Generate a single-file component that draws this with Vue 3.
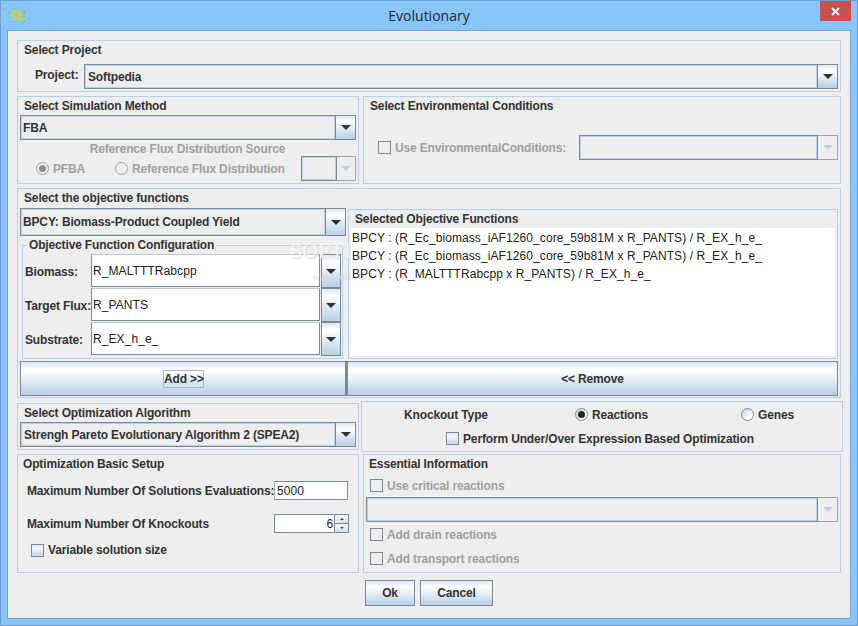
<script setup>
const selected = [
  'BPCY : (R_Ec_biomass_iAF1260_core_59b81M x R_PANTS) / R_EX_h_e_',
  'BPCY : (R_Ec_biomass_iAF1260_core_59b81M x R_PANTS) / R_EX_h_e_',
  'BPCY : (R_MALTTTRabcpp x R_PANTS) / R_EX_h_e_'
];

const configRows = [
  { label: 'Biomass:', value: 'R_MALTTTRabcpp' },
  { label: 'Target Flux:', value: 'R_PANTS' },
  { label: 'Substrate:', value: 'R_EX_h_e_' }
];
</script>

<template>
  <div class="window">
    <div class="titlebar">
      <div class="app-icon">
        <svg width="20" height="14" viewBox="0 0 20 14">
          <circle cx="8" cy="7" r="3.8" fill="none" stroke="#cbdc1c" stroke-width="2.6" />
          <circle cx="14.3" cy="11.2" r="1.7" fill="#cbdc1c" />
          <text x="14" y="6" font-size="6.5" fill="#9aa7a8" font-family="Liberation Sans, sans-serif">3</text>
        </svg>
      </div>
      <div class="title-text">Evolutionary</div>
      <div class="close-wrap"><div class="close">
        <svg width="11" height="11" viewBox="0 0 11 11">
          <path d="M2 2 L9 9 M9 2 L2 9" stroke="#fff" stroke-width="2" />
        </svg>
      </div></div>
    </div>

    <div class="content">
      <section class="panel project">
        <div class="panel-title">Select Project</div>
        <div class="project-row">
          <span class="project-label">Project:</span>
          <div class="combo grow">
            <div class="combo-field pad3">Softpedia</div>
            <div class="combo-btn"><i class="arrow"></i></div>
          </div>
        </div>
      </section>

      <div class="split">
        <section class="panel left sim">
          <div class="panel-title">Select Simulation Method</div>
          <div class="combo inset">
            <div class="combo-field">FBA</div>
            <div class="combo-btn"><i class="arrow"></i></div>
          </div>
          <div class="ref-title">Reference Flux Distribution Source</div>
          <div class="ref-row">
            <i class="radio off sel"></i>
            <span class="muted pfba">PFBA</span>
            <i class="radio off"></i>
            <span class="muted ref-label">Reference Flux Distribution</span>
            <div class="combo small disabled">
              <div class="combo-field"></div>
              <div class="combo-btn"><i class="arrow"></i></div>
            </div>
          </div>
        </section>

        <section class="panel right env">
          <div class="panel-title">Select Environmental Conditions</div>
          <div class="env-row">
            <i class="check off"></i>
            <span class="muted">Use EnvironmentalConditions:</span>
            <div class="combo disabled env-combo">
              <div class="combo-field"></div>
              <div class="combo-btn"><i class="arrow"></i></div>
            </div>
          </div>
        </section>
      </div>

      <section class="panel objective">
        <div class="panel-title">Select the objective functions</div>
        <div class="obj-body">
          <div class="obj-left">
            <div class="combo obj-combo">
              <div class="combo-field">BPCY: Biomass-Product Coupled Yield</div>
              <div class="combo-btn"><i class="arrow"></i></div>
            </div>
            <fieldset class="config">
              <legend>Objective Function Configuration</legend>
              <div v-for="row in configRows" :key="row.label" class="config-row">
                <span class="config-label">{{ row.label }}</span>
                <div class="config-field">{{ row.value }}</div>
                <div class="combo-btn config-btn"><i class="arrow"></i></div>
              </div>
            </fieldset>
          </div>
          <div class="selected">
            <div class="panel-title">Selected Objective Functions</div>
            <div class="selected-list">
              <div v-for="(item, i) in selected" :key="i" class="selected-item">{{ item }}</div>
            </div>
          </div>
        </div>
        <div class="obj-actions">
          <button class="btn add"><span class="focus">Add &gt;&gt;</span></button>
          <button class="btn remove">&lt;&lt; Remove</button>
        </div>
        <div class="wm-big">SOFTPEDIA</div>
        <div class="wm-small">www.softpedia.com</div>
      </section>

      <div class="split tight">
        <section class="panel left algo">
          <div class="panel-title">Select Optimization Algorithm</div>
          <div class="combo inset">
            <div class="combo-field pad3">Strengh Pareto Evolutionary Algorithm 2 (SPEA2)</div>
            <div class="combo-btn"><i class="arrow"></i></div>
          </div>
        </section>

        <section class="panel knockout">
          <div class="ko-row">
            <span class="ko-label">Knockout Type</span>
            <span class="ko-opt reactions"><i class="radio sel"></i>Reactions</span>
            <span class="ko-opt"><i class="radio"></i>Genes</span>
          </div>
          <div class="ko-check">
            <i class="check"></i>
            <span>Perform Under/Over Expression Based Optimization</span>
          </div>
        </section>
      </div>

      <div class="split bottom">
        <section class="panel left basic">
          <div class="panel-title t5">Optimization Basic Setup</div>
          <div class="basic-row first">
            <span class="basic-label">Maximum Number Of Solutions Evaluations:</span>
            <div class="text-input">5000</div>
          </div>
          <div class="basic-row second">
            <span class="basic-label">Maximum Number Of Knockouts</span>
            <div class="spinner">
              <div class="spin-value">6</div>
              <div class="spin-btns">
                <div class="spin-btn"><i class="tiny up"></i></div>
                <div class="spin-btn"><i class="tiny down"></i></div>
              </div>
            </div>
          </div>
          <div class="variable">
            <i class="check"></i>
            <span>Variable solution size</span>
          </div>
        </section>

        <section class="panel right essential">
          <div class="panel-title t5">Essential Information</div>
          <div class="ess-check c1"><i class="check off"></i><span class="muted">Use critical reactions</span></div>
          <div class="combo disabled inset ess-combo">
            <div class="combo-field"></div>
            <div class="combo-btn"><i class="arrow"></i></div>
          </div>
          <div class="ess-check c2"><i class="check off"></i><span class="muted">Add drain reactions</span></div>
          <div class="ess-check c3"><i class="check off"></i><span class="muted">Add transport reactions</span></div>
        </section>
      </div>

      <div class="footer">
        <button class="btn ok">Ok</button>
        <button class="btn cancel">Cancel</button>
      </div>
    </div>
  </div>
</template>

<style scoped>
* {
  box-sizing: border-box;
}
.window {
  width: 858px;
  height: 626px;
  background: #88c5fb;
  border: 1px solid #6c9fd0;
  padding: 0 6px 6px;
  display: flex;
  flex-direction: column;
  font-family: "Liberation Sans", Arial, sans-serif;
  font-size: 12px;
  font-weight: bold;
  letter-spacing: -0.15px;
  color: #333;
  overflow: hidden;
}
.titlebar {
  height: 29px;
  display: grid;
  grid-template-columns: 1fr auto 1fr;
  flex: none;
}
.app-icon {
  padding: 7px 0 0 1px;
}
.title-text {
  font-family: "Open Sans", sans-serif;
  font-size: 14px;
  font-weight: normal;
  letter-spacing: 0;
  color: #1c2733;
  line-height: 30px;
}
.close-wrap {
  display: flex;
  justify-content: flex-end;
}
.close {
  width: 31px;
  height: 20px;
  background: #c75050;
  display: flex;
  align-items: center;
  justify-content: center;
}
.content {
  flex: 1;
  background: #eeeeee;
  border: 1px solid #6ea5d8;
  padding: 9px 9px 0;
}
.panel {
  border: 1px solid #b8cfe5;
  position: relative;
}
.panel-title {
  height: 15px;
  line-height: 17px;
  margin: 1px 0 0 6px;
  white-space: nowrap;
}
.panel-title.t5 {
  margin-left: 5px;
}
.split {
  display: flex;
  gap: 4px;
  margin-top: 4px;
}
.left {
  width: 342px;
  flex: none;
}
.right {
  flex: 1;
}
.project {
  height: 52px;
}
.project-row {
  display: flex;
  align-items: center;
  margin: 7px 2px 0 17px;
}
.project-label {
  width: 49px;
  flex: none;
  margin-top: -3px;
}
.grow {
  flex: 1;
}

/* combo boxes */
.combo {
  display: flex;
  height: 25px;
}
.inset {
  margin: 2px 2px 0;
}
.combo-field {
  flex: 1;
  min-width: 0;
  border: 1px solid #7a8a99;
  box-shadow: inset 0 0 0 1px #b8cfe5;
  padding: 1px 0 0 2px;
  line-height: 23px;
  white-space: nowrap;
}
.pad3 {
  padding-left: 3px;
}
.combo-btn {
  width: 20px;
  flex: none;
  border: 1px solid #7a8a99;
  border-left: none;
  background: linear-gradient(#dde8f3, #fff 22%, #b8cfe5);
  display: flex;
  align-items: center;
  justify-content: center;
}
.arrow {
  width: 0;
  height: 0;
  border-left: 5px solid transparent;
  border-right: 5px solid transparent;
  border-top: 5px solid #333;
}
.disabled .combo-btn {
  background: #eeeeee;
  border-color: #a3a3a3;
}
.disabled .arrow {
  border-top-color: #b8cfe5;
}
.muted {
  color: #a0a0a0;
  white-space: nowrap;
}

/* radios and checkboxes */
.radio {
  width: 13px;
  height: 13px;
  flex: none;
  display: inline-block;
  border-radius: 50%;
  border: 1px solid #7a8a99;
  background: linear-gradient(135deg, #b8cfe5, #fff 70%);
  position: relative;
}
.radio.sel::after {
  content: "";
  position: absolute;
  left: 2px;
  top: 2px;
  width: 7px;
  height: 7px;
  border-radius: 50%;
  background: #222;
}
.radio.off {
  background: none;
  border-color: #a3a3a3;
}
.radio.off.sel::after {
  background: #8f8f8f;
}
.check {
  width: 13px;
  height: 13px;
  flex: none;
  display: inline-block;
  border: 1px solid #7a8a99;
  background: linear-gradient(#dde8f3, #f6f9fc 30%, #c3d6e8);
}
.check.off {
  background: none;
}

/* simulation and environment */
.sim,
.env {
  height: 88px;
}
.ref-title {
  margin-top: 1px;
  height: 15px;
  line-height: 16px;
  text-align: center;
  color: #a0a0a0;
  padding-right: 1px;
}
.ref-row {
  display: flex;
  align-items: center;
  height: 25px;
  padding-left: 18px;
}
.pfba {
  margin-left: 4px;
  width: 62px;
}
.ref-label {
  margin-left: 4px;
  width: 169px;
}
.small {
  width: 55px;
}
.small .combo-btn {
  width: 19px;
}
.env-row {
  display: flex;
  align-items: center;
  height: 25px;
  margin: 22px 2px 0 14px;
}
.env-row .muted {
  margin-left: 4px;
  padding-top: 1px;
}
.env-combo {
  width: 259px;
  margin-left: auto;
}

/* objective */
.objective {
  height: 210px;
  margin-top: 4px;
}
.obj-body {
  display: flex;
  margin: 3px 2px 0;
}
.obj-left {
  width: 326px;
  margin-right: 2px;
  flex: none;
}
.obj-combo {
  height: 28px;
}
.obj-combo .combo-field {
  line-height: 26px;
  padding-top: 0;
}
.config {
  margin: 2px 0 0 2px;
  padding: 1px 0 2px 0;
  width: 321px;
  border: 1px solid #b8cfe5;
  min-width: 0;
}
.config legend {
  margin-left: 4px;
  padding: 0 2px;
  height: 15px;
  line-height: 15px;
}
.config-row {
  display: flex;
  height: 34px;
}
.config-label {
  width: 68px;
  flex: none;
  padding: 1px 0 0 2px;
  line-height: 34px;
  white-space: nowrap;
}
.config-field {
  width: 229px;
  height: 33px;
  background: #fff;
  border: 1px solid #7a8a99;
  border-top-color: #b9c5d1;
  padding: 1px 0 0 1px;
  line-height: 31px;
  font-weight: normal;
  letter-spacing: 0.09px;
  color: #222;
  flex: none;
}
.config-btn {
  width: 20px;
  height: 34px;
  border-left: 1px solid #7a8a99;
  margin-left: 1px;
}
.selected {
  flex: 1;
  height: 150px;
  margin-top: 1px;
  border: 1px solid #b8cfe5;
  margin-right: 0;
}
.selected-list {
  position: relative;
  z-index: 1;
  margin: 2px 2px 2px;
  height: 128px;
  background: #fff;
  padding: 1px 0 0 1px;
  font-weight: normal;
  letter-spacing: 0.09px;
  color: #222;
}
.selected-item {
  height: 18px;
  line-height: 18px;
  white-space: nowrap;
}
.obj-actions {
  display: flex;
  margin: 2px 2px 0;
}
.btn {
  font: inherit;
  letter-spacing: inherit;
  color: inherit;
  border: 1px solid #7a8a99;
  background: linear-gradient(#dde8f3, #fff 25%, #b8cfe5);
  padding: 0;
  display: flex;
  align-items: center;
  justify-content: center;
}
.add {
  width: 326px;
  height: 35px;
  padding-left: 1px;
}
.remove {
  flex: 1;
  height: 35px;
  border-left: 2px solid #7a8a99;
  font-size: 12px;
}
.focus {
  display: block;
  width: 41px;
  height: 18px;
  line-height: 16px;
  border: 1px solid #a3b8cc;
  text-align: center;
  white-space: nowrap;
}
.wm-big {
  position: absolute;
  left: 272px;
  top: 49px;
  font-family: "Liberation Serif", serif;
  font-size: 22px;
  font-weight: normal;
  letter-spacing: 0;
  color: #f8f8f8;
  text-shadow: 1px 1px 1px #d4d4d4;
  pointer-events: none;
  white-space: nowrap;
  opacity: 0.85;
}
.wm-small {
  position: absolute;
  left: 294px;
  top: 82px;
  font-family: "Liberation Serif", serif;
  font-size: 10px;
  font-weight: normal;
  letter-spacing: 0;
  color: #d8d8d8;
  white-space: nowrap;
  pointer-events: none;
  opacity: 0.85;
}

/* algorithm and knockout */
.tight {
  gap: 2px;
  height: 54px;
  align-items: flex-start;
  margin-top: 3px;
}
.algo {
  height: 47px;
  margin-top: 2px;
}
.knockout {
  width: 482px;
  height: 51px;
  flex: none;
}
.ko-row {
  display: flex;
  align-items: center;
  height: 15px;
  margin-top: 5px;
  padding-left: 42px;
}
.ko-label {
  width: 171px;
  flex: none;
}
.ko-opt {
  display: flex;
  align-items: center;
  gap: 4px;
}
.reactions {
  width: 166px;
  flex: none;
}
.ko-check {
  display: flex;
  align-items: center;
  gap: 4px;
  height: 15px;
  margin-top: 9px;
  padding-left: 84px;
}

/* bottom panels */
.bottom {
  margin-top: -1px;
}
.basic,
.essential {
  height: 119px;
}
.basic-row {
  display: flex;
  align-items: center;
  height: 19px;
  padding-left: 9px;
}
.basic-row.first {
  margin-top: 10px;
}
.basic-row.second {
  margin-top: 14px;
}
.basic-label {
  width: 247px;
  flex: none;
  padding-top: 1px;
  white-space: nowrap;
}
.text-input {
  width: 74px;
  height: 19px;
  background: #fff;
  border: 1px solid #7a8a99;
  border-left-color: #aab6c2;
  padding: 1px 0 0 2px;
  line-height: 17px;
  font-weight: normal;
  letter-spacing: 0.09px;
  color: #222;
}
.spinner {
  display: flex;
  width: 75px;
  height: 19px;
}
.spin-value {
  flex: 1;
  background: #fff;
  border: 1px solid #7a8a99;
  border-right: none;
  text-align: right;
  padding: 1px 1px 0 0;
  line-height: 17px;
  font-weight: normal;
  color: #222;
}
.spin-btns {
  width: 15px;
  display: flex;
  flex-direction: column;
}
.spin-btn {
  height: 10px;
  border: 1px solid #7a8a99;
  background: linear-gradient(#f7fafc, #d3e0ec);
  display: flex;
  align-items: center;
  justify-content: center;
}
.spin-btn + .spin-btn {
  height: 9px;
  border-top: none;
}
.tiny {
  width: 0;
  height: 0;
  border-left: 2px solid transparent;
  border-right: 2px solid transparent;
}
.tiny.up {
  border-bottom: 2px solid #444;
}
.tiny.down {
  border-top: 2px solid #444;
}
.variable {
  display: flex;
  align-items: center;
  gap: 4px;
  margin-top: 10px;
  padding-left: 13px;
}
.ess-check {
  display: flex;
  align-items: center;
  gap: 4px;
  height: 13px;
  padding-left: 6px;
}
.c1 {
  margin-top: 8px;
}
.c2 {
  margin-top: 6px;
}
.c3 {
  margin-top: 11px;
}
.ess-combo {
  margin-top: 5px;
}

.footer {
  display: flex;
  justify-content: center;
  gap: 5px;
  margin-top: 7px;
}
.ok {
  width: 50px;
  height: 26px;
}
.cancel {
  width: 73px;
  height: 26px;
}
</style>

<style>
html,
body {
  margin: 0;
  background: #88c5fb;
}
</style>
